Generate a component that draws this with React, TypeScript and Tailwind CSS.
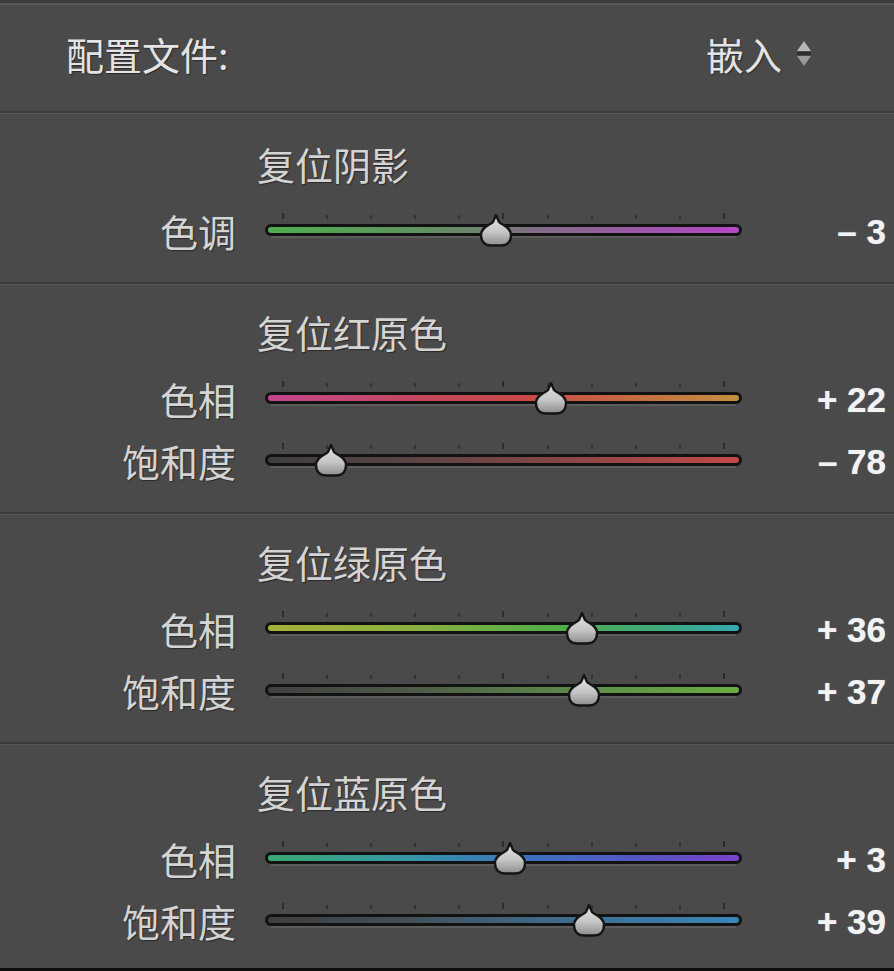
import React from "react";

type Row = { label: string; value: number; grad: string };
type Section = { title: string; pt: string; pb: string; rows: Row[] };

const sections: Section[] = [
  {
    title: "复位阴影",
    pt: "pt-[30px]",
    pb: "pb-[20px]",
    rows: [
      {
        label: "色调",
        value: -3,
        grad: "bg-[linear-gradient(to_right,#4fae4f,#5f945f_30%,#6f7f6f_48%,#7f6f84_55%,#9a58a6_78%,#b647c8)]",
      },
    ],
  },
  {
    title: "复位红原色",
    pt: "pt-[27px]",
    pb: "pb-[20px]",
    rows: [
      {
        label: "色相",
        value: 22,
        grad: "bg-[linear-gradient(to_right,#c2468c,#c4485a_35%,#c84a48_55%,#c4703f_80%,#c48f42)]",
      },
      {
        label: "饱和度",
        value: -78,
        grad: "bg-[linear-gradient(to_right,#3e3e3e,#5a4444_30%,#8c4646_65%,#c44848)]",
      },
    ],
  },
  {
    title: "复位绿原色",
    pt: "pt-[27px]",
    pb: "pb-[20px]",
    rows: [
      {
        label: "色相",
        value: 36,
        grad: "bg-[linear-gradient(to_right,#a6b03a,#8cb03e_30%,#4fae48_62%,#3eaa7a_82%,#36a8b0)]",
      },
      {
        label: "饱和度",
        value: 37,
        grad: "bg-[linear-gradient(to_right,#404040,#4e5a48_30%,#5e8a4a_65%,#68ae42)]",
      },
    ],
  },
  {
    title: "复位蓝原色",
    pt: "pt-[27px]",
    pb: "pb-[16px]",
    rows: [
      {
        label: "色相",
        value: 3,
        grad: "bg-[linear-gradient(to_right,#3aa872,#3696a6_30%,#3a72bc_55%,#5456c4_78%,#7a44c8)]",
      },
      {
        label: "饱和度",
        value: 39,
        grad: "bg-[linear-gradient(to_right,#3e3e3e,#44505a_30%,#3f6e92_65%,#3a86b8)]",
      },
    ],
  },
];

const cjk = "font-['Noto_Sans_CJK_SC','Noto_Sans',sans-serif]";

function Thumb({ left }: { left: number }) {
  return (
    <svg
      className="absolute top-[5px]"
      style={{ left: left - 17 }}
      width="34"
      height="35"
      viewBox="0 0 34 35"
    >
      <defs>
        <linearGradient id="thumbg" x1="0" y1="0" x2="0" y2="1">
          <stop offset="0" stopColor="#e4e4e4" />
          <stop offset="0.55" stopColor="#c6c6c6" />
          <stop offset="1" stopColor="#8c8c8c" />
        </linearGradient>
      </defs>
      <path
        d="M17 2 L20 9 C23 12 32 14 32 22 C32 29 28 32.5 22 32.5 L12 32.5 C6 32.5 2 29 2 22 C2 14 11 12 14 9 Z"
        fill="url(#thumbg)"
        stroke="#151515"
        strokeWidth="2.4"
        strokeLinejoin="round"
      />
    </svg>
  );
}

function Slider({ value, grad }: { value: number; grad: string }) {
  const pos = 238 + 2.2 * value;
  const ticks = Array.from({ length: 11 }, (_, i) => i);
  return (
    <div className="relative ml-[29px] h-[46px] w-[477px]">
      <div className="flex h-[11px] items-end justify-between px-[17px] pt-[5px]">
        {ticks.map((i) => (
          <div
            key={i}
            className={
              i === 0 || i === 5 || i === 10
                ? "h-[6px] w-[2px] bg-[#2c2c2c]"
                : "h-[4px] w-[2px] bg-[#333333]"
            }
          />
        ))}
      </div>
      <div className="mt-[5px] h-[12px] rounded-full bg-[#121212] p-[3px]">
        <div className={"h-full rounded-full " + grad} />
      </div>
      <div className="mx-[6px] h-[2px] bg-[#5c5c5c]" />
      <Thumb left={pos} />
    </div>
  );
}

function ValueText({ v }: { v: number }) {
  const t = v < 0 ? `– ${-v}` : `+ ${v}`;
  return (
    <div className="flex-1 pr-[8px] text-right font-['Liberation_Sans',Arial,sans-serif] text-[35px] font-bold leading-none text-[#f2f2f2] [text-shadow:0_0_1px_#9fb4d0]">
      {t}
    </div>
  );
}

function Separator() {
  return (
    <div className="flex flex-col">
      <div className="h-[2px] bg-[#3a3a3a]" />
      <div className="h-[1px] bg-[#575757]" />
    </div>
  );
}

export default function App() {
  return (
    <div className="flex h-[971px] w-[894px] flex-col overflow-hidden bg-[#4a4a4a]">
      <div className="h-[3px] bg-[#3a3a3a]" />
      <div className="h-[2px] bg-[#585858]" />
      <div
        className={
          "flex h-[106px] items-center justify-between pb-[8px] pl-[66px] pr-[80px] text-[38px] leading-none text-[#e4e4e4] [text-shadow:1px_1px_1px_#2a2a2a] " +
          cjk
        }
      >
        <span>配置文件:</span>
        <div className="flex items-center gap-[12px]">
          <span>嵌入</span>
          <svg width="20" height="30" viewBox="0 0 20 30">
            <path d="M10 2 L17 12 L3 12 Z" fill="#b8b8b8" />
            <rect x="3" y="13" width="14" height="3" fill="#2e2e2e" />
            <path d="M3 17 L17 17 L10 27 Z" fill="#9a9a9a" />
          </svg>
        </div>
      </div>
      <Separator />
      {sections.map((s, si) => (
        <React.Fragment key={si}>
          <div className={"flex flex-col " + s.pt + " " + s.pb}>
            <div
              className={
                "h-[40px] pl-[257px] text-[38px] leading-[40px] text-[#d4d4d4] [text-shadow:1px_1px_1px_#2a2a2a] " +
                cjk
              }
            >
              {s.title}
            </div>
            <div className="mt-[16px] flex flex-col">
              {s.rows.map((r, ri) => (
                <div key={ri} className="flex h-[62px] items-center">
                  <div
                    className={
                      "w-[236px] text-right text-[38px] leading-none text-[#d4d4d4] [text-shadow:1px_1px_1px_#2a2a2a] " +
                      cjk
                    }
                  >
                    {r.label}
                  </div>
                  <Slider value={r.value} grad={r.grad} />
                  <ValueText v={r.value} />
                </div>
              ))}
            </div>
          </div>
          {si < sections.length - 1 && <Separator />}
        </React.Fragment>
      ))}
      <div className="flex-1 bg-[#0e0e0e]" />
    </div>
  );
}
